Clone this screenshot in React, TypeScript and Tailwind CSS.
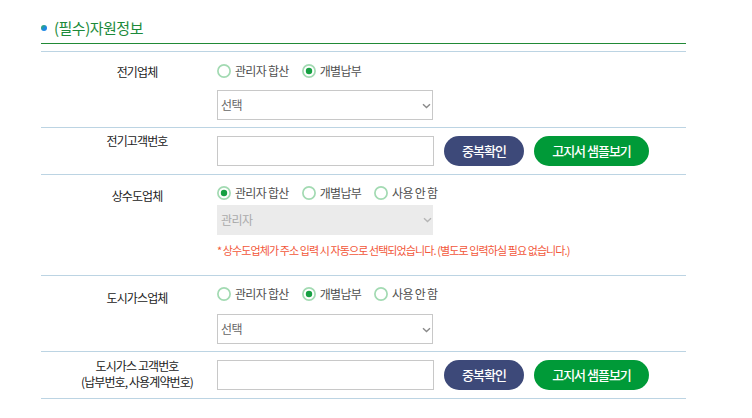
import React from "react";

const font = { fontFamily: '"Noto Sans CJK KR", "Noto Sans", sans-serif' };

function Radio({ label, checked }: { label: string; checked?: boolean }) {
  return (
    <label className="flex items-center gap-[4px]">
      <svg width="14" height="14" viewBox="0 0 14 14">
        <circle cx="7" cy="7" r="6.1" fill="#fff" stroke="#a2dab2" strokeWidth="1.7" />
        {checked && <circle cx="7" cy="7" r="3.2" fill="#17a043" />}
      </svg>
      <span className="text-[12px] leading-[20px] tracking-[-0.7px] text-[#4f4f4f]">{label}</span>
    </label>
  );
}

function Chevron({ color = "#8a8a8a" }: { color?: string }) {
  return (
    <svg width="9" height="6" viewBox="0 0 9 6" className="absolute right-[1px] top-[12px]">
      <path d="M1 1.2l3.5 3.3L8 1.2" fill="none" stroke={color} strokeWidth="1.4" />
    </svg>
  );
}

function Select({ value, disabled }: { value: string; disabled?: boolean }) {
  return (
    <div
      className={
        disabled
          ? "relative flex h-[30px] w-[216px] items-center bg-[#ebebeb] px-[4px] text-[12px] tracking-[-0.5px] text-[#aaa]"
          : "relative flex h-[30px] w-[216px] items-center border border-[#c8c8c8] bg-white px-[3px] text-[12px] tracking-[-0.5px] text-[#666]"
      }
    >
      {value}
      <Chevron color={disabled ? "#b5b5b5" : "#8a8a8a"} />
    </div>
  );
}

function InputWithButtons() {
  return (
    <div className="flex items-center gap-[10px] py-[8px]">
      <div className="h-[30px] w-[217px] border border-[#c8c8c8] bg-white" />
      <button className="flex h-[30px] w-[80px] items-center justify-center rounded-full bg-[#3d4979] text-[13px] font-medium tracking-[-1px] text-white">
        중복확인
      </button>
      <button className="flex h-[30px] w-[115px] items-center justify-center rounded-full bg-[#009a38] text-[13px] font-medium tracking-[-1px] text-white">
        고지서 샘플보기
      </button>
    </div>
  );
}

function Row({ label, labelPad, children }: { label: React.ReactNode; labelPad: string; children: React.ReactNode }) {
  return (
    <div className="flex border-b border-[#bcd4e3]">
      <div className={`w-[176px] shrink-0 pl-[16px] text-center text-[12px] leading-[16px] tracking-[-0.9px] text-[#222] ${labelPad}`}>
        {label}
      </div>
      <div className="flex-1">{children}</div>
    </div>
  );
}

export default function App() {
  return (
    <div className="min-h-[418px] bg-white" style={font}>
      <div className="w-[686px] pl-[41px] pt-[18px]">
        <div className="flex h-[20px] items-center gap-[7px]">
          <span className="h-[6px] w-[6px] rounded-full bg-[linear-gradient(135deg,#2fb24c,#1e88e5_60%)]" />
          <h2 className="text-[15px] tracking-[-0.5px] text-[#1c8a3a]">(필수)자원정보</h2>
        </div>
        <div className="mt-[5px] border-b border-[#218a36]" />

        <div className="mt-[7px] border-t border-[#bcd4e3]">
          <Row label="전기업체" labelPad="pt-[12px]">
            <div className="flex flex-col gap-[9px] pb-[7px] pt-[9px]">
              <div className="flex items-center gap-[13px]">
                <Radio label="관리자 합산" />
                <Radio label="개별납부" checked />
              </div>
              <Select value="선택" />
            </div>
          </Row>

          <Row label="전기고객번호" labelPad="pt-[5px]">
            <InputWithButtons />
          </Row>

          <Row label="상수도업체" labelPad="pt-[13px]">
            <div className="flex flex-col pb-[18px] pt-[8px]">
              <div className="flex items-center gap-[13px]">
                <Radio label="관리자 합산" checked />
                <Radio label="개별납부" />
                <Radio label="사용 안 함" />
              </div>
              <div className="mt-[2px]">
                <Select value="관리자" disabled />
              </div>
              <p className="mt-[8px] text-[11px] leading-[14px] tracking-[-0.9px] text-[#f2573a]">
                * 상수도업체가 주소 입력 시 자동으로 선택되었습니다. (별도로 입력하실 필요 없습니다.)
              </p>
            </div>
          </Row>

          <Row label="도시가스업체" labelPad="pt-[14px]">
            <div className="flex flex-col gap-[10px] pb-[7px] pt-[8px]">
              <div className="flex items-center gap-[13px]">
                <Radio label="관리자 합산" />
                <Radio label="개별납부" checked />
                <Radio label="사용 안 함" />
              </div>
              <Select value="선택" />
            </div>
          </Row>

          <Row
            label={
              <>
                도시가스 고객번호
                <br />
                (납부번호, 사용계약번호)
              </>
            }
            labelPad="pt-[6px]"
          >
            <InputWithButtons />
          </Row>
        </div>
      </div>
    </div>
  );
}
